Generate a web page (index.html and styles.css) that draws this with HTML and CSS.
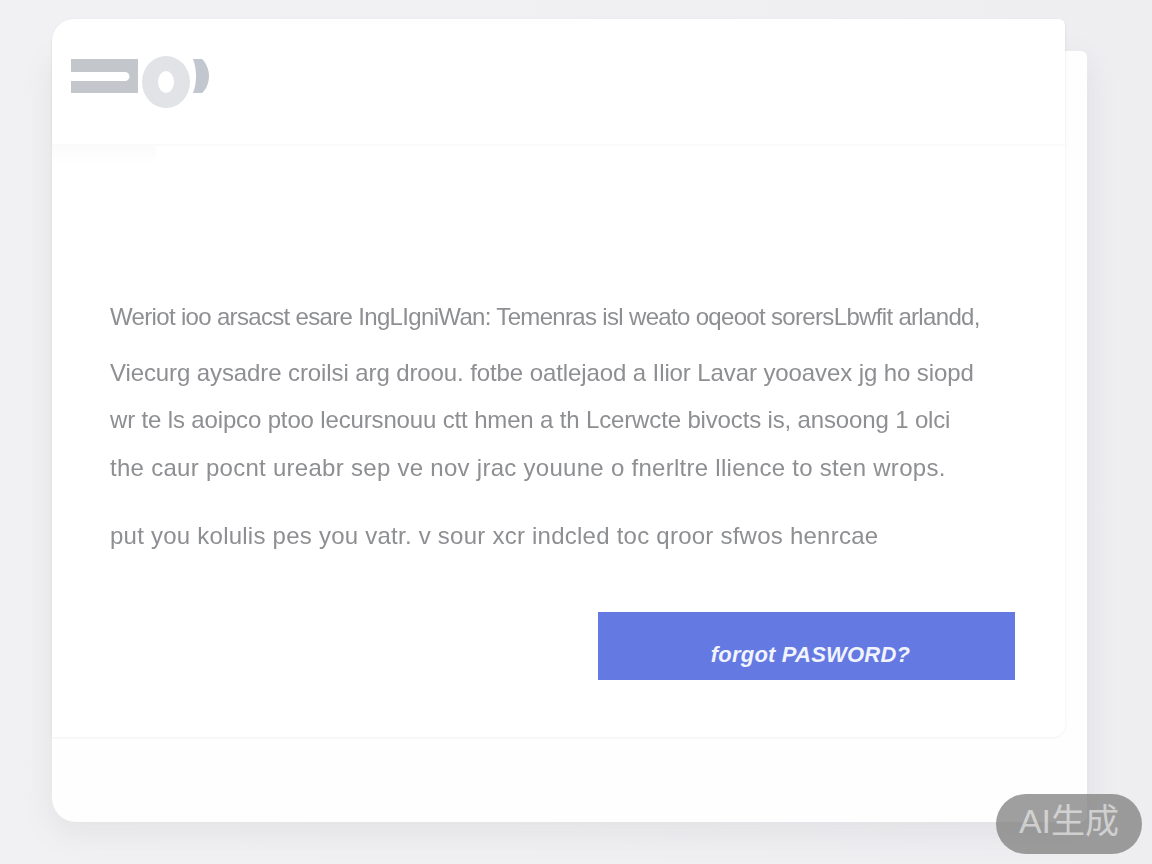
FILE: index.html
```html
<!DOCTYPE html>
<html lang="en">
<head>
<meta charset="utf-8">
<title>Forgot password</title>
<link rel="stylesheet" href="styles.css">
</head>
<body>
<main class="stage">
  <div class="back-card"></div>
  <section class="card">
    <header class="card-header">
      <svg class="logo" width="140" height="54" viewBox="0 0 140 54" aria-hidden="true">
        <path class="logo-bar" d="M1 5H68V39H1V27H55a4.500 4.500 0 0 0 0-9H1Z"/>
        <ellipse class="logo-ring" cx="96" cy="28" rx="24" ry="26"/>
        <ellipse class="logo-hole" cx="96" cy="28" rx="8" ry="11"/>
        <path class="logo-arc" d="M123 5H132C136 9 139 15 139 22C139 29 136 36 132 39H123C125 34 126 28 126 22C126 16 125 10 123 5Z"/>
      </svg>
    </header>
    <div class="header-shade"></div>
    <div class="card-body">
      <div class="copy">
        <p class="line line-1">Weriot ioo arsacst esare IngLIgniWan: Temenras isl weato oqeoot sorersLbwfit arlandd,</p>
        <p class="line line-2">Viecurg aysadre croilsi arg droou. fotbe oatlejaod a Ilior Lavar yooavex jg ho siopd</p>
        <p class="line line-3">wr te ls aoipco ptoo lecursnouu ctt hmen a th Lcerwcte bivocts is, ansoong 1 olci</p>
        <p class="line line-4">the caur pocnt ureabr sep ve nov jrac youune o fnerltre llience to sten wrops.</p>
        <p class="line line-5">put you kolulis pes you vatr. v sour xcr indcled toc qroor sfwos henrcae</p>
      </div>
      <div class="actions">
        <a class="btn" href="#">forgot PASWORD?</a>
      </div>
    </div>
  </section>
</main>
<div class="badge">AI生成</div>
</body>
</html>
```
FILE: styles.css
```css
* { box-sizing: border-box; }

html, body { height: 100%; }

body {
  margin: 0;
  height: 864px;
  overflow: hidden;
  background: linear-gradient(90deg, #f1f1f3 0%, #f0f0f2 50%, #eeeef1 100%);
  font-family: "Liberation Sans", Arial, sans-serif;
  padding: 19px 0 0 52px;
}

.stage {
  position: relative;
  width: 1013px;
  height: 718px;
}

.back-card {
  position: absolute;
  left: 0;
  top: 32px;
  width: 1035px;
  height: 771px;
  background: #fefefe;
  border-radius: 6px 6px 6px 24px;
  box-shadow: 0 10px 30px rgba(120, 122, 135, 0.12);
}

.card {
  position: relative;
  width: 1013px;
  height: 718px;
  background: #fff;
  border-radius: 22px 6px 12px 0;
  box-shadow: 0 1px 2px rgba(120, 122, 135, 0.08), 1px 0 3px rgba(120, 122, 135, 0.03);
  display: flex;
  flex-direction: column;
}

.card-header {
  height: 125px;
  flex: none;
  padding: 35px 0 0 18px;
  border-radius: 22px 6px 0 0;
  box-shadow: 0 1px 3px rgba(120, 122, 135, 0.08);
}

.logo {
  display: block;
  filter: blur(0.7px);
}
.logo-bar { fill: #c3c7cc; }
.logo-ring { fill: #e1e3e6; }
.logo-hole { fill: #fff; }
.logo-arc { fill: #c2c6cf; }

.header-shade {
  height: 20px;
  width: 104px;
  flex: none;
  background: linear-gradient(180deg, #fafafb, #fff);
}

.card-body {
  flex: 1;
  padding: 140px 50px 0 58px;
  display: flex;
  flex-direction: column;
}

.line {
  margin: 0;
  font-size: 24px;
  line-height: 26px;
  color: #8e8f92;
  white-space: nowrap;
  filter: blur(0.3px);
}

.line-1 { letter-spacing: -0.67px; }
.line-2 { margin-top: 30px; letter-spacing: -0.1px; }
.line-3 { margin-top: 21px; letter-spacing: -0.15px; }
.line-4 { margin-top: 22px; letter-spacing: 0.28px; }
.line-5 { margin-top: 42px; letter-spacing: 0.24px; }

.actions {
  display: flex;
  justify-content: flex-end;
  margin-top: 63px;
}

.btn {
  width: 417px;
  height: 68px;
  background: #647ae2;
  color: #f1f3fd;
  font-size: 22px;
  font-style: italic;
  font-weight: 700;
  letter-spacing: 0.2px;
  text-decoration: none;
  display: flex;
  justify-content: center;
  align-items: flex-end;
  padding: 0 0 12px 8px;
  line-height: 26px;
}

.badge {
  position: absolute;
  left: 996px;
  top: 794px;
  width: 146px;
  height: 60px;
  padding-bottom: 7px;
  border-radius: 30px;
  background: rgba(122, 122, 122, 0.72);
  color: rgba(255, 255, 255, 0.55);
  font-size: 34px;
  line-height: 40px;
  display: flex;
  align-items: center;
  justify-content: center;
  font-family: "Liberation Sans", "Noto Sans CJK SC", sans-serif;
}
```
